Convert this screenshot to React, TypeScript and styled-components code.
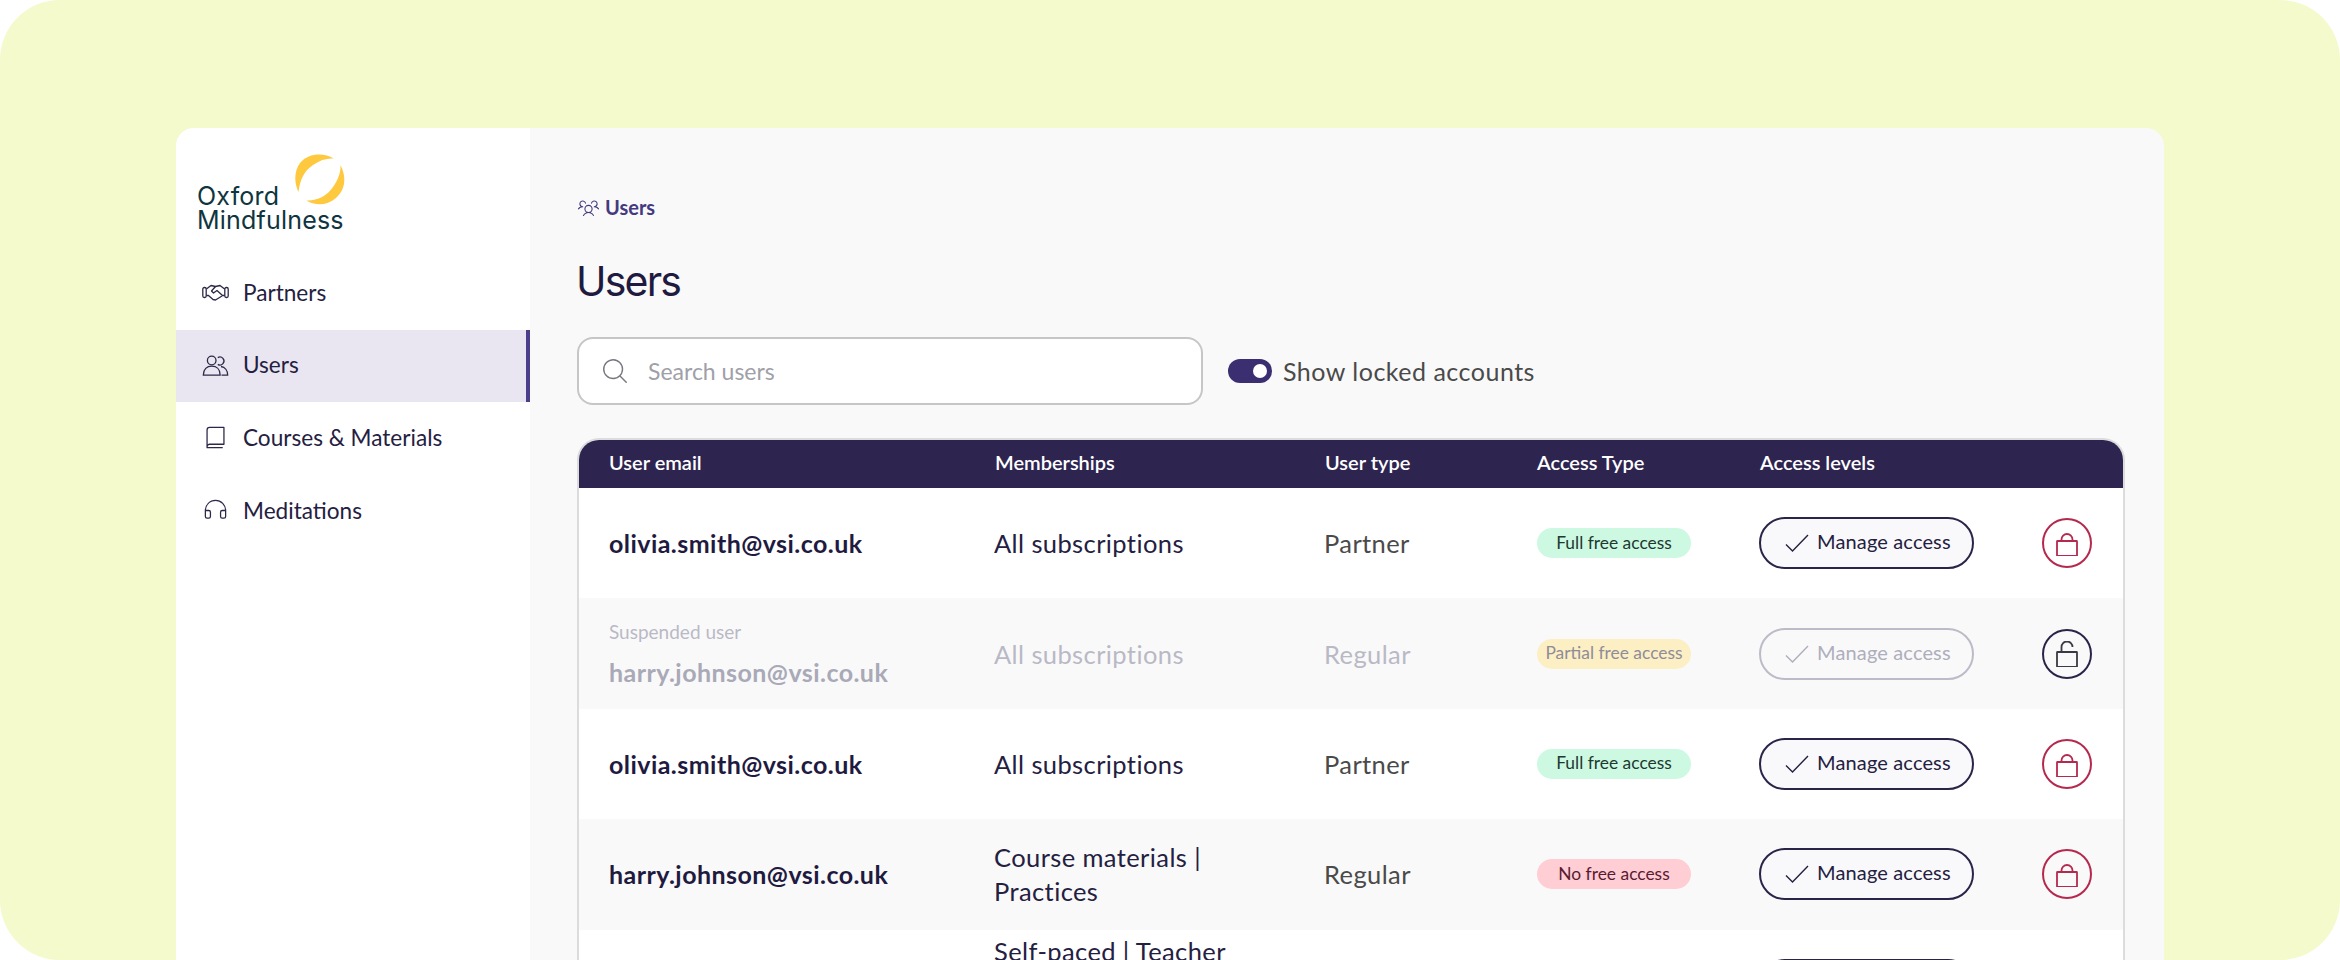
import React from 'react'
import styled, { createGlobalStyle } from 'styled-components'
import {
  PiBookLight,
  PiHeadphonesLight,
  PiMagnifyingGlassLight,
  PiUsersThreeLight,
} from 'react-icons/pi'

const GlobalStyle = createGlobalStyle`
  html, body {
    margin: 0;
    padding: 0;
    background: #fff;
    font-family: Lato, 'Noto Sans', sans-serif;
  }
  * {
    box-sizing: border-box;
  }
`

const Canvas = styled.div`
  width: 2340px;
  height: 960px;
  background: #f4facb;
  border-radius: 60px;
  overflow: hidden;
  padding: 128px 176px 0;
`

const Panel = styled.div`
  display: flex;
  width: 1988px;
  height: 832px;
  border-radius: 18px 18px 0 0;
  overflow: hidden;
  background: #f9f9f9;
`

const Sidebar = styled.aside`
  width: 354px;
  flex-shrink: 0;
  background: #fff;
  padding-top: 26px;
`

const LogoWrap = styled.div`
  position: relative;
  height: 75px;
  margin: 0 0 28px 22px;
`

const LogoMark = styled.svg`
  position: absolute;
  left: 97px;
  top: 0;
`

const LogoText = styled.div`
  position: absolute;
  left: -1px;
  top: 30px;
  font-family: Inter, sans-serif;
  font-size: 25px;
  line-height: 24px;
  letter-spacing: 0.2px;
  color: #0f3540;
`

const Nav = styled.nav`
  display: flex;
  flex-direction: column;
`

const NavItem = styled.a<{ $active?: boolean }>`
  display: flex;
  align-items: center;
  gap: 14px;
  height: 72.6px;
  padding: 0 0 2px 26px;
  font-size: 22.6px;
  color: #24203f;
  background: ${({ $active }) => ($active ? '#e9e6f2' : 'transparent')};
  border-right: 4px solid ${({ $active }) => ($active ? '#4b3f8c' : 'transparent')};
  svg {
    width: 27px;
    height: 27px;
    color: #2c2848;
  }
`

const Main = styled.main`
  flex: 1;
  min-width: 0;
  padding: 0 39px 0 47px;
`

const Breadcrumb = styled.div`
  display: flex;
  align-items: center;
  gap: 5px;
  margin-top: 66px;
  height: 26px;
  font-size: 20px;
  font-weight: 700;
  color: #45397f;
  svg {
    width: 23px;
    height: 23px;
  }
`

const Title = styled.h1`
  margin: 36px 0 0 -1px;
  font-family: Inter, sans-serif;
  font-size: 41px;
  line-height: 50px;
  font-weight: 400;
  letter-spacing: -1.8px;
  color: #1f1a40;
`

const Toolbar = styled.div`
  display: flex;
  align-items: center;
  gap: 25px;
  margin-top: 31px;
`

const Search = styled.div`
  display: flex;
  align-items: center;
  gap: 18px;
  width: 626px;
  height: 68px;
  padding-left: 21px;
  background: #fff;
  border: 2px solid #c6c6c6;
  border-radius: 16px;
  font-size: 23px;
  color: #a0a0a8;
  svg {
    width: 30px;
    height: 30px;
    color: #77777f;
  }
`

const ToggleRow = styled.div`
  display: flex;
  align-items: center;
  gap: 11px;
  font-size: 25px;
  letter-spacing: 0.5px;
  color: #4a4a4a;
`

const Toggle = styled.span`
  position: relative;
  width: 44px;
  height: 24px;
  border-radius: 12px;
  background: #3b2f72;
  &::after {
    content: '';
    position: absolute;
    top: 5px;
    right: 5px;
    width: 14px;
    height: 14px;
    border-radius: 50%;
    background: #fff;
  }
`

const Table = styled.div`
  width: 1548px;
  margin-top: 33px;
  border: 2px solid #dcdcdc;
  border-bottom: 0;
  border-radius: 22px 22px 0 0;
  overflow: hidden;
`

const columns = '386px 330px 212px 223px 282px 83px'

const HeadRow = styled.div`
  display: grid;
  grid-template-columns: ${columns};
  align-items: center;
  height: 49px;
  margin-top: -1px;
  padding: 0 0 3px 30px;
  background: #2e2450;
  font-size: 20px;
  font-weight: 600;
  color: #fff;
`

const Row = styled.div`
  display: grid;
  grid-template-columns: ${columns};
  align-items: center;
  height: 110.4px;
  padding-left: 30px;
  background: #fff;
  &:nth-child(odd) {
    background: #f9f9f9;
  }
`

const Email = styled.div<{ $muted?: boolean }>`
  font-size: 25px;
  font-weight: 700;
  letter-spacing: 0.45px;
  color: ${({ $muted }) => ($muted ? '#a9a9b8' : '#1f1a40')};
`

const Suspended = styled.div`
  margin-bottom: 14px;
  font-size: 19px;
  font-weight: 400;
  letter-spacing: 0;
  color: #b9b9c6;
`

const Memberships = styled.div<{ $muted?: boolean }>`
  max-width: 240px;
  margin-left: -1px;
  font-size: 25.5px;
  line-height: 34px;
  letter-spacing: 0.4px;
  color: ${({ $muted }) => ($muted ? '#b9b9c6' : '#24203f')};
`

const UserType = styled.div<{ $muted?: boolean }>`
  margin-left: -1px;
  font-size: 25.5px;
  letter-spacing: 0.4px;
  color: ${({ $muted }) => ($muted ? '#b9b9c6' : '#4a4a4a')};
`

const pillColors = {
  full: { bg: '#cdf9e3', fg: '#1c3a30' },
  partial: { bg: '#fcefc4', fg: '#8f8c98' },
  none: { bg: '#ffcdd4', fg: '#5a1a30' },
}

const Pill = styled.span<{ $kind: keyof typeof pillColors }>`
  display: flex;
  align-items: center;
  justify-content: center;
  width: 154px;
  height: 30px;
  padding-bottom: 2px;
  border-radius: 15px;
  font-size: 17.4px;
  background: ${({ $kind }) => pillColors[$kind].bg};
  color: ${({ $kind }) => pillColors[$kind].fg};
`

const ManageButton = styled.button<{ $muted?: boolean }>`
  display: flex;
  align-items: center;
  gap: 8px;
  width: 215px;
  height: 52px;
  padding: 0 0 0 24px;
  margin-left: -1px;
  background: ${({ $muted }) => ($muted ? 'transparent' : '#f9f9fb')};
  border: 2px solid ${({ $muted }) => ($muted ? '#bcbcc8' : '#2a2548')};
  border-radius: 26px;
  font-family: inherit;
  font-size: 20px;
  letter-spacing: 0.15px;
  color: ${({ $muted }) => ($muted ? '#aeaebc' : '#24203f')};
`

const ManageLabel = styled.span`
  margin-top: -4px;
`

const LockButton = styled.button<{ $locked: boolean }>`
  display: flex;
  align-items: center;
  justify-content: center;
  width: 50px;
  height: 50px;
  padding: 0;
  background: transparent;
  border: 2px solid ${({ $locked }) => ($locked ? '#b5294e' : '#2a2548')};
  border-radius: 50%;
  color: ${({ $locked }) => ($locked ? '#b5294e' : '#3a3a44')};
`

const CheckIcon = () => (
  <svg width="24" height="18" viewBox="0 0 24 18" fill="none" stroke="currentColor" strokeWidth="1.4">
    <path d="M1 10.5 L7.5 17 L23 1" />
  </svg>
)

const LockIcon = ({ open }: { open?: boolean }) => (
  <svg width="24" height="26" viewBox="0 -3 24 26" fill="none" stroke="currentColor" strokeWidth="1.8">
    <rect x="2" y="8" width="20" height="15" rx="0.5" />
    {open ? <path d="M6.5 8 V3 a5.5 5.5 0 0 1 11 0" /> : <path d="M6.5 8 V6.5 a5.5 5.5 0 0 1 11 0 V8" />}
  </svg>
)

// phosphor's handshake has no side cuffs, so this one is drawn by hand
const HandshakeIcon = () => (
  <svg viewBox="0 0 27 27" fill="none" stroke="currentColor" strokeWidth="1.3" strokeLinejoin="round">
    <rect x="0.8" y="8.5" width="3.4" height="10" rx="1.5" />
    <rect x="22.8" y="8.5" width="3.4" height="10" rx="1.5" />
    <path d="M4.4 10 L9 6.5 L13.5 7.5 L18 6.5 L22.6 10" />
    <path d="M13.5 7.5 L9.5 12 L11.5 14 L15 11.5 L20.5 16.5 L22.6 16.5" />
    <path d="M4.4 16.5 L6.5 16.5 L11 20.5 L13.5 21 L20 17" />
  </svg>
)

const UsersIcon = () => (
  <svg viewBox="0 0 27 27" fill="none" stroke="currentColor" strokeWidth="1.3" strokeLinejoin="round">
    <circle cx="9.7" cy="9.5" r="4.3" />
    <path d="M15.8 6.6 A4 4 0 1 1 15.8 13.4" />
    <path d="M1.3 24.2 C1.3 18 5 15.2 9.7 15.2 C14.5 15.2 18.2 18 18.2 24.2 Z" />
    <path d="M19 15.5 C23 16 25.7 19.5 25.7 24.2 H19.5" />
  </svg>
)

const users = [
  { email: 'olivia.smith@vsi.co.uk', plans: 'All subscriptions', type: 'Partner', pill: 'full', label: 'Full free access' },
  { email: 'harry.johnson@vsi.co.uk', plans: 'All subscriptions', type: 'Regular', pill: 'partial', label: 'Partial free access', suspended: true },
  { email: 'olivia.smith@vsi.co.uk', plans: 'All subscriptions', type: 'Partner', pill: 'full', label: 'Full free access' },
  { email: 'harry.johnson@vsi.co.uk', plans: 'Course materials | Practices', type: 'Regular', pill: 'none', label: 'No free access' },
  { email: 'olivia.smith@vsi.co.uk', plans: 'Self-paced | Teacher training | Course materials', type: 'Partner', pill: 'full', label: 'Full free access' },
] as const

export default function App() {
  return (
    <Canvas>
      <GlobalStyle />
      <Panel>
        <Sidebar>
          <LogoWrap>
            <LogoMark width="51" height="52" viewBox="0 0 51 52" fill="#fec93f">
              <path d="M38.5 4.5 C30 -1 14 -2 5 9 C-1 17 -1 29 3.5 38 C5 26 9 17 18 11 C25 6 32 4 38.5 4.5 Z" />
              <path d="M45.5 11 C52 24 50 36 41 44 C32 52 20 52 11.5 46.5 C22 47 32 42 38 33 C43 26 46 18 45.5 11 Z" />
            </LogoMark>
            <LogoText>
              Oxford
              <br />
              Mindfulness
            </LogoText>
          </LogoWrap>
          <Nav>
            <NavItem><HandshakeIcon />Partners</NavItem>
            <NavItem $active><UsersIcon />Users</NavItem>
            <NavItem><PiBookLight />Courses &amp; Materials</NavItem>
            <NavItem><PiHeadphonesLight />Meditations</NavItem>
          </Nav>
        </Sidebar>
        <Main>
          <Breadcrumb><PiUsersThreeLight />Users</Breadcrumb>
          <Title>Users</Title>
          <Toolbar>
            <Search><PiMagnifyingGlassLight />Search users</Search>
            <ToggleRow><Toggle />Show locked accounts</ToggleRow>
          </Toolbar>
          <Table>
            <HeadRow>
              <span>User email</span>
              <span>Memberships</span>
              <span>User type</span>
              <span>Access Type</span>
              <span>Access levels</span>
            </HeadRow>
            {users.map((u, i) => {
              const muted = 'suspended' in u
              return (
                <Row key={i}>
                  <Email $muted={muted}>
                    {muted && <Suspended>Suspended user</Suspended>}
                    {u.email}
                  </Email>
                  <Memberships $muted={muted}>{u.plans}</Memberships>
                  <UserType $muted={muted}>{u.type}</UserType>
                  <Pill $kind={u.pill}>{u.label}</Pill>
                  <ManageButton $muted={muted}><CheckIcon /><ManageLabel>Manage access</ManageLabel></ManageButton>
                  <LockButton $locked={!muted}><LockIcon open={muted} /></LockButton>
                </Row>
              )
            })}
          </Table>
        </Main>
      </Panel>
    </Canvas>
  )
}
